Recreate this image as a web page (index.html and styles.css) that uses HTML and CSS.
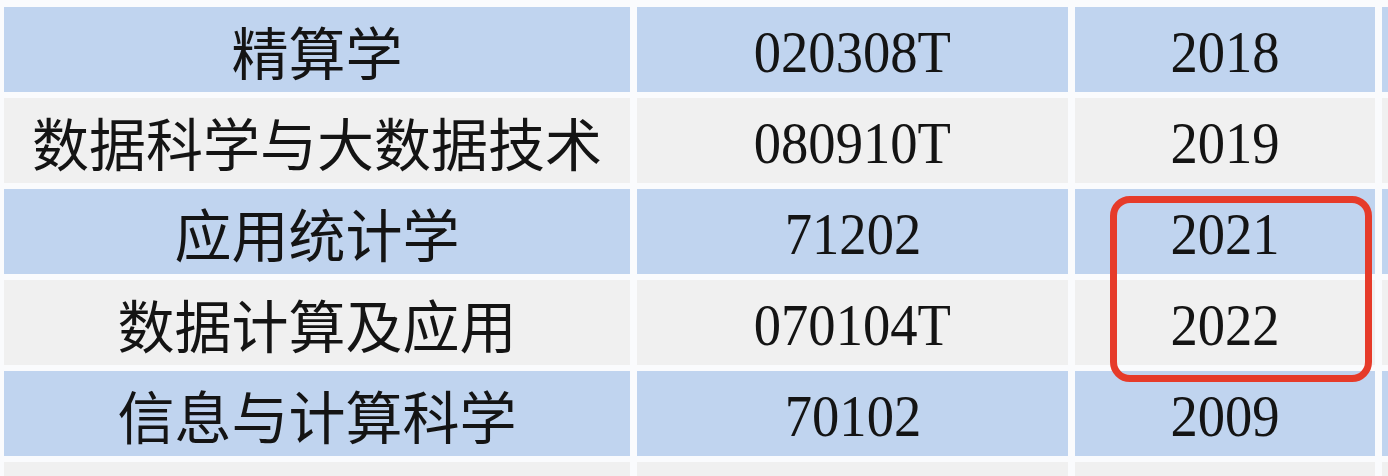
FILE: index.html
```html
<!DOCTYPE html>
<html lang="zh-CN">
<head>
<meta charset="utf-8">
<title>专业表</title>
<link rel="stylesheet" href="styles.css">
</head>
<body>
<div class="sheet">
  <div class="grid">
    <div class="cell blue cn">精算学</div>
    <div class="cell blue num"><span>020308T</span></div>
    <div class="cell blue num"><span>2018</span></div>
    <div class="cell blue"></div>

    <div class="cell gray cn">数据科学与大数据技术</div>
    <div class="cell gray num"><span>080910T</span></div>
    <div class="cell gray num"><span>2019</span></div>
    <div class="cell gray"></div>

    <div class="cell blue cn">应用统计学</div>
    <div class="cell blue num"><span>71202</span></div>
    <div class="cell blue num"><span>2021</span></div>
    <div class="cell blue"></div>

    <div class="cell gray cn">数据计算及应用</div>
    <div class="cell gray num"><span>070104T</span></div>
    <div class="cell gray num"><span>2022</span></div>
    <div class="cell gray"></div>

    <div class="cell blue cn">信息与计算科学</div>
    <div class="cell blue num"><span>70102</span></div>
    <div class="cell blue num"><span>2009</span></div>
    <div class="cell blue"></div>

    <div class="cell gray"></div>
    <div class="cell gray"></div>
    <div class="cell gray"></div>
    <div class="cell gray"></div>
  </div>
  <div class="highlight"></div>
</div>
</body>
</html>
```

FILE: styles.css
```css
html, body {
  margin: 0;
  padding: 0;
  background: #fafbfd;
  overflow: hidden;
}

.sheet {
  position: relative;
  width: 1388px;
  height: 476px;
  overflow: hidden;
}

.grid {
  display: grid;
  grid-template-columns: 626px 431px 300px 100px;
  grid-auto-rows: 85px;
  column-gap: 7px;
  row-gap: 6px;
  padding: 7px 0 0 4px;
}

.cell {
  display: flex;
  align-items: center;
  justify-content: center;
  color: #141414;
  overflow: hidden;
}

.blue {
  background: #c0d4ef;
}

.gray {
  background: #f0f0f0;
}

.cn {
  font-family: "Noto Sans CJK SC", "Noto Sans", sans-serif;
  font-size: 57px;
  line-height: 1;
  padding-top: 2px;
}

.num span {
  display: inline-block;
  font-family: "Liberation Serif", serif;
  font-size: 60px;
  line-height: 1;
  transform: scaleX(0.91);
  padding-top: 4px;
}

.highlight {
  position: absolute;
  left: 1110px;
  top: 196px;
  width: 248px;
  height: 172px;
  border: 7px solid #e63b2a;
  border-radius: 20px;
}
```
